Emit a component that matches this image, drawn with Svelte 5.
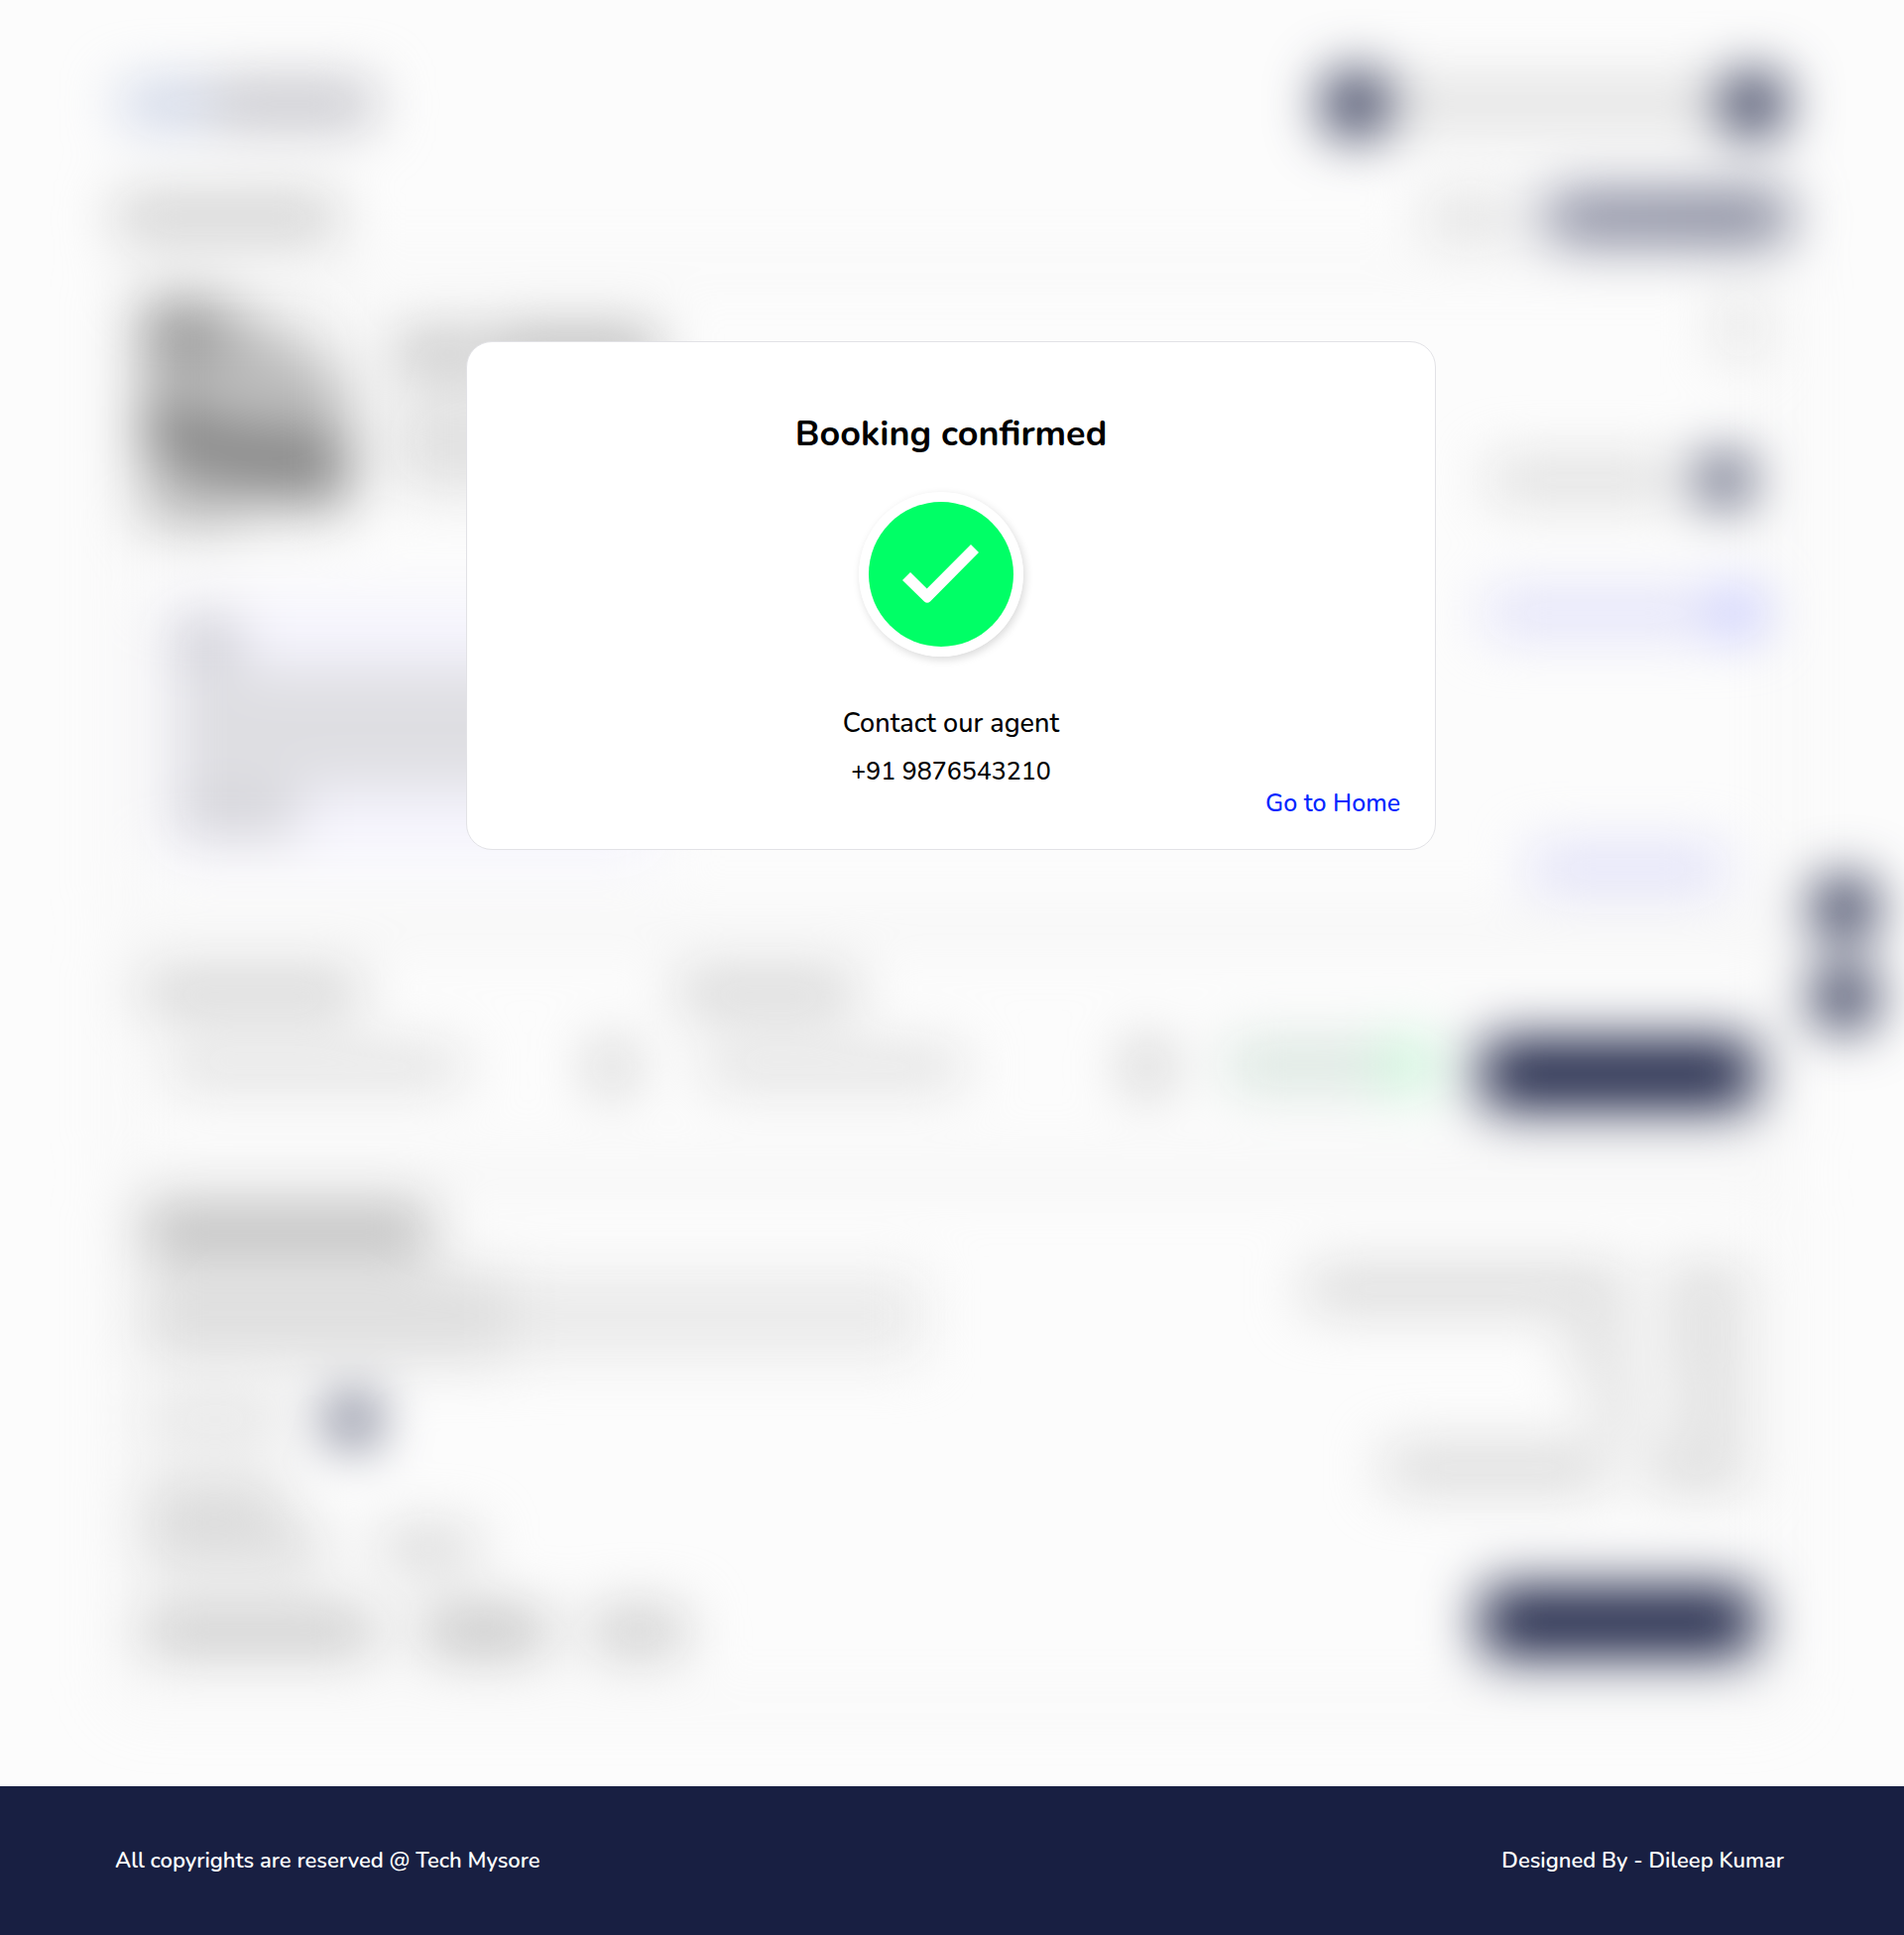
<script>
  // Each bar stands for one out-of-focus piece of the page behind the dialog:
  // width, height, tone and the space before it, in pixels.
  const brand = [
    { w: 88, h: 40, tone: '#c6cfe4', gap: 6 },
    { w: 166, h: 44, tone: '#bfbfc6', gap: 2 }
  ];
  const titleRow = [{ w: 226, h: 42, tone: '#cbcbcb' }];
  const summaryTitle = [
    { w: 90, h: 40, tone: '#bebebe' },
    { w: 170, h: 44, tone: '#b2b2b2', gap: 8 }
  ];
  const noteLines = [
    { w: 64, h: 44, tone: '#c8c8ce' },
    { w: 420, h: 120, tone: '#dedee2' },
    { w: 124, h: 40, tone: '#ceced2' }
  ];
  const pickers = [
    { label: 220, value: 300, labelTone: '#cdcdcd', dot: '#c6c6c6' },
    { label: 180, value: 264, labelTone: '#cfcfcf', dot: '#c0c0c0' }
  ];
  const totals = [
    { name: 326, price: 84 },
    { name: 60, price: 84 },
    { name: 46, price: 74 },
    { name: 226, price: 104 }
  ];
  const grand = [
    { w: 236, h: 46, tone: '#c8c8c8' },
    { w: 126, h: 46, tone: '#c0c0c0', gap: 46 },
    { w: 96, h: 46, tone: '#cacaca', gap: 44 }
  ];
</script>

{#snippet bars(list)}
  {#each list as b}
    <span
      class="bar"
      style:width="{b.w}px"
      style:height="{b.h}px"
      style:background={b.tone}
      style:margin-left="{b.gap ?? 0}px"
    ></span>
  {/each}
{/snippet}

<div class="page">
  <div class="stage">
    <div class="backdrop" aria-hidden="true">
      <div class="top">
        <div class="row">{@render bars(brand)}</div>
        <div class="search">
          <span class="disc large"></span>
          <span class="field"></span>
          <span class="disc"></span>
        </div>
      </div>

      <div class="top tools">
        <div class="row">{@render bars(titleRow)}</div>
        <div class="row">
          <span class="hint"></span>
          <span class="switch"></span>
        </div>
      </div>

      <section class="card summary">
        <div class="left">
          <div class="intro">
            <svg class="photo" viewBox="0 0 210 236" preserveAspectRatio="none">
              <path d="M0 0H210V170L190 236H0Z" fill="#bcbcbc" />
              <path d="M84 0H210V84Z" fill="#f0f0f0" />
              <path d="M0 0H70L84 56L0 70Z" fill="#969696" />
              <path d="M0 98L90 132L210 146V208L96 190L0 156Z" fill="#828282" />
              <path d="M110 214L210 216V236H100Z" fill="#ececec" />
            </svg>
            <div class="caption">
              <div class="row">{@render bars(summaryTitle)}</div>
              <span class="text"></span>
            </div>
          </div>
          <div class="note">{@render bars(noteLines)}</div>
        </div>
        <div class="right">
          <span class="menu"></span>
          <div class="row people"><span class="hint wide"></span><span class="disc small"></span></div>
          <div class="row place"><span class="lilac"></span><span class="lilac dot"></span></div>
          <span class="lilac short"></span>
        </div>
      </section>

      <section class="card schedule">
        {#each pickers as p}
          <div class="picker">
            <span class="bar" style:width="{p.label}px" style:background={p.labelTone}></span>
            <div class="value">
              <span class="bar pale" style:width="{p.value}px"></span>
              <span class="bar icon" style:background={p.dot}></span>
            </div>
          </div>
        {/each}
        <div class="status"><span class="mint"></span><span class="mint bright"></span></div>
        <span class="action"></span>
      </section>

      <section class="card bill">
        <div class="details">
          <span class="bar heading"></span>
          <div class="row copy"><span class="strong"></span><span class="faint"></span></div>
          <div class="row person"><span class="bar pale"></span><span class="disc tiny"></span></div>
          <span class="bar label"></span>
          <div class="row offer"><span class="bar"></span><span class="bar code"></span></div>
          <div class="row grand">{@render bars(grand)}</div>
        </div>
        <div class="totals">
          {#each totals as t}
            <div class="line">
              <span class="bar" style:width="{t.name}px"></span>
              <span class="bar price" style:width="{t.price}px"></span>
            </div>
          {/each}
          <span class="action"></span>
        </div>
      </section>

      <div class="floating"><span class="disc"></span><span class="disc"></span></div>
    </div>

    <div class="overlay">
      <div class="dialog" role="dialog" aria-labelledby="dialog-title">
        <h1 id="dialog-title">Booking confirmed</h1>
        <svg class="tick" viewBox="0 0 166 166" role="img" aria-label="Confirmed">
          <circle cx="83" cy="83" r="83" fill="#fff" />
          <circle cx="83" cy="83" r="73" fill="#00ff66" />
          <path
            d="M44 89L52 81L68.700 97.500L113 53L121 61L72 110.500Q69 113 66 110.500Z"
            fill="#fff"
          />
        </svg>
        <p class="contact">Contact our agent</p>
        <p class="phone">+91 9876543210</p>
        <a class="home" href="#home">Go to Home</a>
      </div>
    </div>
  </div>

  <footer>
    <span>All copyrights are reserved @ Tech Mysore</span>
    <span>Designed By - Dileep Kumar</span>
  </footer>
</div>

<style>
  :global(body) {
    margin: 0;
    background: #fcfcfc;
  }

  .page {
    display: flex;
    flex-direction: column;
    min-height: 100vh;
    font-family: Nunito, 'Noto Sans', 'Open Sans', sans-serif;
    font-weight: 500;
    color: #000;
  }

  .stage {
    display: grid;
    flex: 1;
    overflow: hidden;
    background: #fcfcfc;
  }

  .backdrop,
  .overlay {
    grid-area: 1 / 1;
    min-width: 0;
    box-sizing: border-box;
  }

  .backdrop {
    position: relative;
    padding: 74px 116px 40px;
    filter: blur(28px);
  }

  .top,
  .row,
  .search {
    display: flex;
    align-items: center;
  }

  .top {
    justify-content: space-between;
    height: 62px;
  }

  .search {
    margin-right: 4px;
  }

  .tools {
    height: 44px;
    margin-top: 61px;
  }

  .bar {
    display: block;
    flex: none;
    height: 38px;
    border-radius: 8px;
    background: #d4d4d4;
  }

  .bar.pale {
    background: #dedede;
  }

  .disc {
    flex: none;
    width: 64px;
    height: 64px;
    border-radius: 50%;
    background: #181f42;
  }

  .disc.large {
    width: 66px;
    height: 66px;
  }

  .disc.small {
    width: 50px;
    height: 50px;
  }

  .disc.tiny {
    width: 44px;
    height: 44px;
  }

  .field {
    width: 336px;
    height: 52px;
    background: #e2e2e2;
  }

  .hint {
    width: 90px;
    height: 38px;
    margin-right: 30px;
    background: #dcdcdc;
  }

  .hint.wide {
    width: 190px;
    margin-right: 22px;
    background: #dadada;
  }

  .switch {
    width: 246px;
    height: 48px;
    border-radius: 12px;
    background: linear-gradient(90deg, #7b7e95, #6d7188);
  }

  .card {
    display: flex;
    box-sizing: border-box;
    padding: 30px 30px 30px 24px;
    border: 4px solid #e0e0e0;
    border-radius: 24px;
  }

  .summary {
    justify-content: space-between;
    height: 660px;
    margin-top: 27px;
  }

  .left {
    display: flex;
    flex-direction: column;
    gap: 72px;
    width: 520px;
  }

  .intro {
    display: flex;
    gap: 44px;
  }

  .photo {
    flex: none;
    width: 208px;
    height: 230px;
  }

  .caption {
    display: flex;
    flex-direction: column;
    gap: 20px;
    padding-top: 30px;
  }

  .text {
    width: 260px;
    height: 100px;
    background: #e1e1e1;
  }

  .note {
    display: flex;
    flex-direction: column;
    gap: 6px;
    margin-left: 18px;
    padding: 20px 14px 26px;
    background: #f5f4fd;
  }

  .right {
    display: flex;
    flex-direction: column;
    align-items: flex-end;
  }

  .menu {
    width: 34px;
    height: 60px;
    background: #dcdcdc;
  }

  .people {
    margin: 98px 6px 0 0;
  }

  .place {
    margin-top: 86px;
  }

  .lilac {
    width: 228px;
    height: 40px;
    margin-right: 4px;
    background: #dedef9;
  }

  .lilac.dot {
    width: 46px;
    height: 46px;
    margin-right: -6px;
    border-radius: 50%;
    background: #adb1ff;
  }

  .lilac.short {
    width: 198px;
    margin: 214px 30px 0 0;
    background: #dcdcf8;
  }

  .schedule {
    height: 226px;
    margin-top: 20px;
  }

  .picker {
    width: 540px;
  }

  .value {
    display: flex;
    justify-content: space-between;
    align-items: center;
    margin-top: 32px;
    padding: 0 48px 0 24px;
  }

  .icon {
    width: 38px;
    height: 48px;
  }

  .status {
    display: flex;
    flex: 1;
    align-items: center;
    align-self: center;
    margin-top: 26px;
    padding-left: 12px;
  }

  .mint {
    width: 158px;
    height: 50px;
    background: #d8e5de;
  }

  .mint.bright {
    width: 56px;
    height: 54px;
    background: #c8f5d8;
  }

  .action {
    flex: none;
    width: 276px;
    height: 70px;
    border-radius: 12px;
    background: #181f42;
  }

  .schedule .action {
    margin-top: 66px;
  }

  .bill {
    justify-content: space-between;
    height: 530px;
    margin-top: 20px;
    padding-top: 17px;
  }

  .details {
    flex: none;
  }

  .heading {
    width: 292px;
    height: 50px;
    background: #bababa;
  }

  .copy {
    margin-top: 16px;
  }

  .strong {
    width: 370px;
    height: 92px;
    background: #dedede;
  }

  .faint {
    width: 416px;
    height: 84px;
    background: #eaeaea;
  }

  .person {
    gap: 44px;
    margin-top: 37px;
  }

  .person .bar {
    width: 146px;
  }

  .label {
    width: 144px;
    margin-top: 38px;
    background: #d4d4d4;
  }

  .offer {
    gap: 54px;
    margin-top: 12px;
  }

  .offer .bar {
    width: 184px;
    background: #d4d4d4;
  }

  .offer .code {
    width: 100px;
  }

  .grand {
    margin-top: 42px;
  }

  .totals {
    display: flex;
    flex-direction: column;
    align-items: flex-end;
    padding-top: 66px;
  }

  .line {
    display: flex;
    justify-content: flex-end;
    gap: 36px;
    margin: 0 8px 22px 0;
  }

  .line .bar {
    background: #d4d4d4;
  }

  .totals .action {
    margin-top: 79px;
  }

  .floating {
    position: absolute;
    top: 884px;
    right: 28px;
    display: flex;
    flex-direction: column;
    gap: 26px;
  }

  .overlay {
    display: flex;
    justify-content: center;
    align-items: flex-start;
    padding: 344px 2px 20px 0;
    z-index: 1;
  }

  .dialog {
    display: flex;
    flex-direction: column;
    align-items: center;
    box-sizing: border-box;
    width: 51%;
    padding: 69px 35px 30px;
    border: 1px solid #e2e2e6;
    border-radius: 26px;
    background: #fff;
  }

  h1,
  p {
    margin: 0;
  }

  h1 {
    font-size: 36px;
    font-weight: 700;
    line-height: 48px;
  }

  .tick {
    width: 166px;
    height: 166px;
    margin: 34px 20px 50px 0;
    border-radius: 50%;
    box-shadow: 2px 3px 8px rgb(0 0 0 / 15%);
  }

  .contact {
    font-size: 27px;
    line-height: 36px;
  }

  .phone {
    margin-top: 14px;
    font-size: 25px;
    line-height: 32px;
  }

  .home {
    align-self: flex-end;
    color: #0026ff;
    font-size: 25px;
    line-height: 32px;
    text-decoration: none;
  }

  footer {
    display: flex;
    justify-content: space-between;
    align-items: center;
    gap: 24px;
    min-height: 150px;
    padding: 0 121px 0 116px;
    background: #181f42;
    color: #fff;
    font-size: 22px;
    font-weight: 600;
    line-height: 30px;
  }
</style>
